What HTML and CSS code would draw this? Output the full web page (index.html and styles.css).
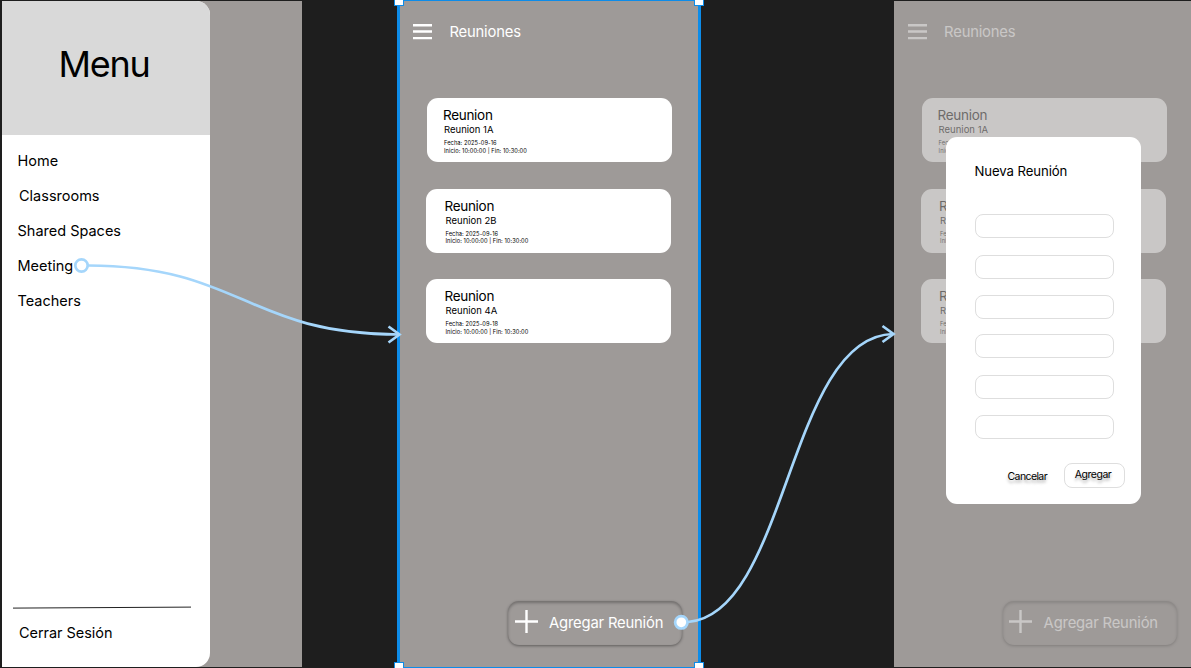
FILE: index.html
```html
<!DOCTYPE html>
<html lang="es">
<head>
<meta charset="utf-8">
<title>Prototipo</title>
<link rel="stylesheet" href="styles.css">
</head>
<body>
<main class="canvas">
  <section class="frame frame-menu">
    <aside class="drawer">
      <header class="drawer-head"><h1 class="drawer-title">Menu</h1></header>
      <nav class="nav">
        <a class="nav-item">Home</a>
        <a class="nav-item indent">Classrooms</a>
        <a class="nav-item">Shared Spaces</a>
        <a class="nav-item">Meeting</a>
        <a class="nav-item">Teachers</a>
      </nav>
      <footer class="drawer-foot">
        <svg class="rule" width="180" height="3" viewBox="0 0 180 3"><path d="M0 2.1 L178 1.1" stroke="#222" stroke-width="1"/></svg>
        <a class="logout">Cerrar Sesión</a>
      </footer>
    </aside>
  </section>

  <section class="frame frame-list">
    <header class="topbar">
      <svg class="burger" width="19" height="16" viewBox="0 0 19 16"><path d="M0 1.2H19M0 7.500H19M0 14.1H19" stroke="#fff" stroke-width="2.4"/></svg>
      <h2 class="topbar-title">Reuniones</h2>
    </header>
    <div class="cards">
      <article class="card card-first"><h3 class="card-title">Reunion</h3><p class="card-sub">Reunion 1A</p><p class="card-meta">Fecha: 2025-09-16<br>Inicio: 10:00:00 | Fin: 10:30:00</p></article>
      <article class="card"><h3 class="card-title">Reunion</h3><p class="card-sub">Reunion 2B</p><p class="card-meta">Fecha: 2025-09-16<br>Inicio: 10:00:00 | Fin: 10:30:00</p></article>
      <article class="card"><h3 class="card-title">Reunion</h3><p class="card-sub">Reunion 4A</p><p class="card-meta">Fecha: 2025-09-18<br>Inicio: 10:00:00 | Fin: 10:30:00</p></article>
    </div>
    <button class="add"><svg width="23" height="23" viewBox="0 0 23 23"><path d="M0 11.500H23M11.500 0V23" stroke="#fff" stroke-width="2.4"/></svg><span class="add-label">Agregar Reunión</span></button>
  </section>

  <section class="frame frame-modal">
    <div class="faded">
      <header class="topbar">
        <svg class="burger" width="19" height="16" viewBox="0 0 19 16"><path d="M0 1.2H19M0 7.500H19M0 14.1H19" stroke="#fff" stroke-width="2.4"/></svg>
        <h2 class="topbar-title">Reuniones</h2>
      </header>
      <div class="cards">
        <article class="card card-first"><h3 class="card-title">Reunion</h3><p class="card-sub">Reunion 1A</p><p class="card-meta">Fecha: 2025-09-16<br>Inicio: 10:00:00 | Fin: 10:30:00</p></article>
        <article class="card"><h3 class="card-title">Reunion</h3><p class="card-sub">Reunion 2B</p><p class="card-meta">Fecha: 2025-09-16<br>Inicio: 10:00:00 | Fin: 10:30:00</p></article>
        <article class="card"><h3 class="card-title">Reunion</h3><p class="card-sub">Reunion 4A</p><p class="card-meta">Fecha: 2025-09-18<br>Inicio: 10:00:00 | Fin: 10:30:00</p></article>
      </div>
      <button class="add"><svg width="23" height="23" viewBox="0 0 23 23"><path d="M0 11.500H23M11.500 0V23" stroke="#fff" stroke-width="2.4"/></svg><span class="add-label">Agregar Reunión</span></button>
    </div>
    <form class="modal">
      <h2 class="modal-title">Nueva Reunión</h2>
      <div class="fields">
        <div class="field"></div><div class="field"></div><div class="field"></div>
        <div class="field"></div><div class="field"></div><div class="field"></div>
      </div>
      <div class="actions">
        <span class="cancel">Cancelar</span>
        <span class="submit">Agregar</span>
      </div>
    </form>
  </section>

  <div class="selection"><i class="handle tl"></i><i class="handle tr"></i><i class="handle bl"></i><i class="handle br"></i></div>
  <svg class="links" width="1191" height="668" viewBox="0 0 1191 668">
    <g fill="none" stroke="#a5d6fb" stroke-width="2.7">
      <path d="M88 265.500C242 266 246 334 399 334.500"/>
      <path d="M388.500 326.500L399.500 334.500L388.500 342.500"/>
      <path d="M688 622C788 614 788 336 893 334"/>
      <path d="M882.500 326L893.500 334L882.500 342"/>
      <circle cx="81.500" cy="265.500" r="6.200" fill="#fff"/>
      <circle cx="681.300" cy="622.300" r="6.200" fill="#fff"/>
    </g>
  </svg>
</main>
</body>
</html>
```

FILE: styles.css
```css
* { box-sizing: border-box; }
body { margin: 0; font-family: Inter, "Liberation Sans", sans-serif; color: #000; }
h1, h2, h3, p { margin: 0; font-weight: 400; }
.canvas { position: relative; width: 1191px; height: 668px; overflow: hidden; background: #1e1e1e; }
.frame { position: absolute; top: 1px; height: 666px; width: 300px; background: #9e9a98; overflow: hidden; }
.frame-menu { left: 2px; }
.frame-list { left: 399px; width: 301px; }
.frame-modal { left: 894px; }

.drawer { display: flex; flex-direction: column; width: 208px; height: 666px; border-radius: 0 14px 14px 0; background: #fff; overflow: hidden; }
.drawer-head { flex: none; display: flex; justify-content: center; height: 133.500px; padding: 41px 4px 0 0; background: #d9d9d9; }
.drawer-title { font-size: 36px; line-height: 44px; letter-spacing: -1.300px; white-space: nowrap; }
.nav { display: flex; flex-direction: column; padding: 8.500px 0 0 15.500px; font-size: 14.500px; }
.nav-item { height: 35px; line-height: 35px; }
.indent { padding-left: 1.500px; }
.drawer-foot { margin-top: auto; padding-left: 11px; }
.rule { display: block; }
.logout { display: block; padding: 14px 0 25px 6px; font-size: 14.500px; line-height: 19px; letter-spacing: -.05px; }

.topbar { display: flex; align-items: center; gap: 17.500px; height: 61px; padding-left: 14px; color: #fff; }
.topbar-title { padding-top: 1px; font-size: 14.800px; line-height: 20px; letter-spacing: -.2px; }
.cards { display: flex; flex-direction: column; gap: 26.500px; padding: 36.400px 0 0 27px; }
.card { width: 245px; height: 64px; padding: 7.700px 0 0 18.500px; border-radius: 11px; background: #fff; white-space: nowrap; }
.card-first { margin-left: 1px; padding-left: 16px; }
.card-title { font-size: 13.500px; line-height: 18px; letter-spacing: -.3px; }
.card-sub { padding-left: 1px; font-size: 9.500px; line-height: 12px; }
.card-meta { padding: 3.300px 0 0 1px; font-size: 5.700px; line-height: 7.300px; letter-spacing: .06px; }
.add { display: flex; align-items: center; gap: 11.500px; width: 174px; height: 44px; margin: 257.600px 0 0 109px; padding: 0 0 2px 6.500px; border: 0; border-radius: 11px; background: #9e9a98; box-shadow: inset 0 2px 3px rgba(0,0,0,.28), 0 1px 3px rgba(0,0,0,.4); color: #fff; font: 14.800px/20px Inter, sans-serif; letter-spacing: -.18px; white-space: nowrap; }
.add-label { padding-top: 2px; }

.faded { margin-left: -.4px; opacity: .45; }
.faded .card { color: #333; }
.modal { position: absolute; left: 52px; top: 136.400px; width: 195px; height: 367px; padding: 24.600px 16px 0 28.500px; border-radius: 11px; background: #fff; }
.modal-title { font-size: 13.200px; line-height: 18px; letter-spacing: -.1px; white-space: nowrap; }
.fields { display: flex; flex-direction: column; gap: 16.500px; padding-top: 34.300px; }
.field { width: 139px; height: 24px; border: 1px solid #dedede; border-radius: 8px; }
.field:nth-child(4) { margin-top: -1.500px; }
.actions { display: flex; justify-content: flex-end; gap: 17px; margin-top: 23.700px; font-size: 10.500px; text-shadow: 0 3px 3px rgba(0,0,0,.3); }
.cancel { line-height: 27px; letter-spacing: -.6px; }
.submit { width: 61px; height: 25px; padding-right: 3px; border: 1px solid #dedede; border-radius: 8px; line-height: 21px; letter-spacing: -.45px; text-align: center; }

.selection { position: absolute; left: 397px; top: 0; width: 304px; height: 668px; border: solid #0d8ce9; border-width: 1px 3px; }
.handle { position: absolute; width: 10px; height: 10px; border: 1.500px solid #0d8ce9; background: #fff; }
.tl { left: -6px; top: -5px; }
.tr { right: -6px; top: -5px; }
.bl { left: -6px; bottom: -5px; }
.br { right: -6px; bottom: -5px; }
.links { position: absolute; left: 0; top: 0; }
```
